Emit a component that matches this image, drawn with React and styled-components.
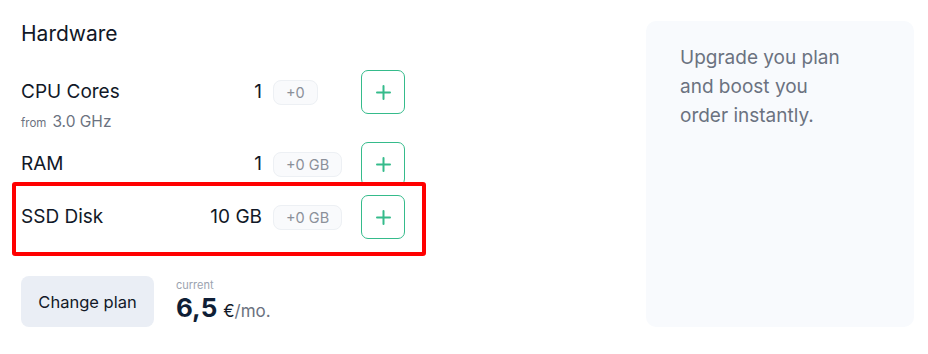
import styled, { createGlobalStyle } from 'styled-components'

const Global = createGlobalStyle`
body {
  margin: 0;
  background: #fff;
  font-family: Inter, "Noto Sans", sans-serif;
  color: #111827;
}
`

const Page = styled.div`
display: flex;
justify-content: space-between;
padding: 21px 14px 27px 21px;
height: 306px;
`

const Left = styled.div`
width: 384px;
display: flex;
flex-direction: column;
`

const Title = styled.h2`
margin: 0;
font-size: 21px;
font-weight: 400;
line-height: 26px;
color: #111827;
`

const Rows = styled.div`
display: flex;
flex-direction: column;
gap: 9px;
margin-top: 23px;
`

const Row = styled.div`
position: relative;
display: grid;
grid-template-columns: 1fr auto 88px 44px;
align-items: start;
${p => p.$marked && `
  &::after {
    content: '';
    position: absolute;
    top: -13px;
    left: -9px;
    right: -21px;
    bottom: -17px;
    border: 4px solid #ff0000;
    border-radius: 3px;
    pointer-events: none;
  }
`}
`

const Label = styled.div`
font-size: 19px;
line-height: 44px;
`

const Sub = styled.div`
font-size: 15.5px;
line-height: 19px;
color: #6b7280;
margin-top: -2px;
span {
  font-size: 11.5px;
  margin-right: 6px;
}
`

const Value = styled.div`
font-size: 19px;
line-height: 44px;
padding-right: 11px;
text-align: right;
`

const Badge = styled.div`
justify-self: start;
margin-top: 10px;
height: 25px;
padding: 0 12px;
display: flex;
align-items: center;
box-sizing: border-box;
border: 1px solid #edf0f4;
background: #f9fafc;
border-radius: 8px;
font-size: 14.5px;
color: #8b9099;
`

const Plus = styled.button`
width: 44px;
height: 44px;
box-sizing: border-box;
border: 1px solid #35bb8b;
border-radius: 7px;
background: #fff;
display: flex;
align-items: center;
justify-content: center;
padding: 0;
cursor: pointer;
`

const Footer = styled.div`
margin-top: auto;
display: flex;
align-items: center;
gap: 22px;
`

const ChangeButton = styled.button`
width: 133px;
height: 51px;
border: none;
border-radius: 8px;
background: #eaeef5;
font-family: inherit;
font-size: 16.5px;
color: #111827;
cursor: pointer;
`

const Price = styled.div`
display: flex;
flex-direction: column;
margin-top: -2px;
`

const Current = styled.div`
font-size: 11px;
line-height: 13px;
color: #9ca3af;
`

const Amount = styled.div`
font-size: 17px;
color: #6b7280;
strong {
  font-size: 26px;
  font-weight: 700;
  color: #0f1e36;
  margin-right: 6px;
}
em {
  font-style: normal;
  color: #111827;
}
`

const Panel = styled.div`
width: 268px;
box-sizing: border-box;
padding: 22px 34px;
background: #f8fafd;
border-radius: 10px;
`

const PanelText = styled.p`
margin: 0;
max-width: 180px;
font-size: 19px;
line-height: 29px;
color: #6b7280;
`

const PlusIcon = () => (
  <svg width="15" height="15" viewBox="0 0 15 15">
    <path d="M7.5 1v13M1 7.5h13" stroke="#35bb8b" strokeWidth="2" strokeLinecap="round" />
  </svg>
)

const items = [
  { name: 'CPU Cores', value: '1', extra: '+0', sub: '3.0 GHz' },
  { name: 'RAM', value: '1', extra: '+0 GB' },
  { name: 'SSD Disk', value: '10 GB', extra: '+0 GB', marked: true },
]

export default function App() {
  return (
    <>
      <Global />
      <Page>
        <Left>
          <Title>Hardware</Title>
          <Rows>
            {items.map(item => (
              <Row key={item.name} $marked={item.marked}>
                <div>
                  <Label>{item.name}</Label>
                  {item.sub && <Sub><span>from</span>{item.sub}</Sub>}
                </div>
                <Value>{item.value}</Value>
                <Badge>{item.extra}</Badge>
                <Plus><PlusIcon /></Plus>
              </Row>
            ))}
          </Rows>
          <Footer>
            <ChangeButton>Change plan</ChangeButton>
            <Price>
              <Current>current</Current>
              <Amount><strong>6,5</strong><em>€</em>/mo.</Amount>
            </Price>
          </Footer>
        </Left>
        <Panel>
          <PanelText>Upgrade you plan and boost you order instantly.</PanelText>
        </Panel>
      </Page>
    </>
  )
}
